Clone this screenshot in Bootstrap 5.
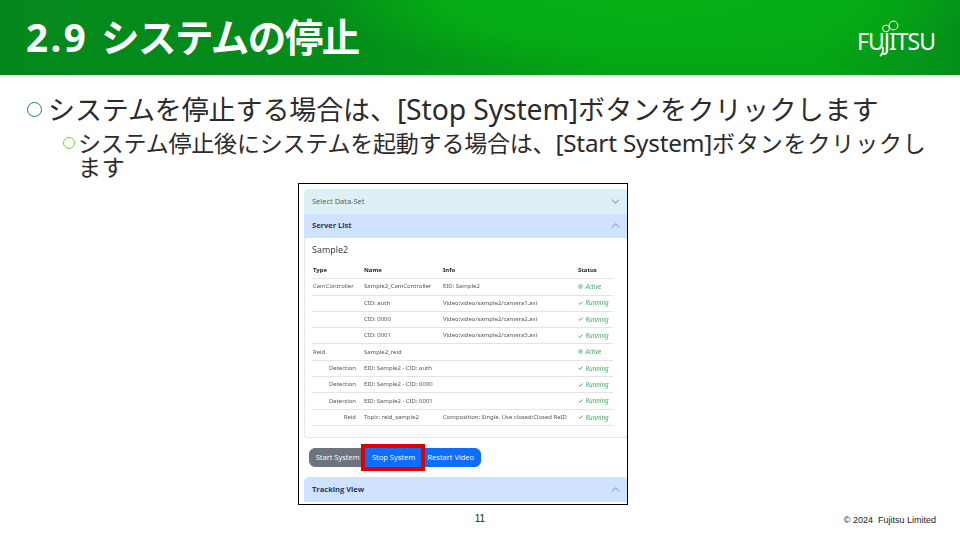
<!DOCTYPE html>
<html lang="ja">

<head>
  <meta charset="utf-8">
  <meta name="viewport" content="width=device-width">
  <title>2.9 システムの停止</title>
  <link href="https://cdn.jsdelivr.net/npm/bootstrap@5.3.3/dist/css/bootstrap.min.css" rel="stylesheet" />
  <style>
    html, body { width: 960px; height: 540px; overflow: hidden; background: #fff; }
    body { font-family: "Noto Sans", "Noto Sans CJK JP", sans-serif; color: #2b2b2b; }

    .slide-head { height: 75px; padding: 0 24px 0 26px; color: #fff;
      background: radial-gradient(ellipse 330px 75px at 650px 0, #05b014 0%, #05ab14 60%, rgba(5,168,20,0) 100%),
                  linear-gradient(90deg, #04881c 0%, #048c1b 35%, #05a415 65%, #05a615 85%, #048f1a 100%); }
    .slide-title { font-size: 38.5px; font-weight: 700; line-height: 1; margin: 0; letter-spacing: -1.5px; }
    .title-num { letter-spacing: 2.5px; margin-right: 4px; }
    .logo-box { position: relative; width: 77px; height: 40px; margin: 5px 2px 0 0; }
    .logo-text { font-size: 23px; line-height: 1; letter-spacing: -1px; margin-top: 10px; white-space: nowrap; }
    .logo-loop { position: absolute; left: 20px; top: -6px; overflow: visible; }

    .bullets { padding: 19px 30px 0 27px; }
    .line-one { font-size: 27px; line-height: 30px; letter-spacing: -.1px; }
    .line-two { font-size: 23px; line-height: 24px; margin-left: 36px; margin-top: 6px; letter-spacing: -.2px; }
    .line-one .latin-part { font-size: 28.3px; }
    .line-two .latin-part { font-size: 24.3px; }
    .line-one .kana-tail { letter-spacing: .35px; }
    .line-two .kana-tail { letter-spacing: .85px; }
    .ring { flex: none; border-radius: 50%; }
    .ring-one { width: 15px; height: 15px; border: 1.5px solid #1c8a3f; margin: 8px 6px 0 0; }
    .ring-two { width: 12px; height: 12px; border: 1.5px solid #7cd62c; margin: 6px 3px 0 0; }

    .shot-frame { position: relative; width: 330px; height: 322px; margin: 4px 0 0 298px; padding: 5px 0 0 5px;
      border: 1px solid #000; overflow: hidden; background: #fff; }
    .shot-inner { width: 324px; filter: blur(.5px); font-size: 7.5px; color: #555; font-family: "Open Sans", "Noto Sans", sans-serif; }

    .shot-inner .accordion-item { border: 0; border-radius: 0; background: transparent; }
    .shot-inner .accordion-button { font-size: 7.5px; padding: 0 8px; height: 24.5px; border-radius: 0; box-shadow: none; }
    .shot-inner .accordion-button::after { width: 9px; height: 9px; background-size: 9px; opacity: .6; }
    .shot-inner .accordion-button.row-plain { background: #ddf0f8; color: #555; }
    .shot-inner .accordion-button.row-open { background: #cfe2ff; color: #1c3a66; font-weight: 700; }
    .shot-body { padding: 6px 15px 12px 6px; border: 1px solid #e6e6e6; border-top: 0; height: 200px; border-radius: 0 0 3px 3px; }
    .shot-name { font-size: 9px; color: #333; margin: 0 0 6.5px 1px; line-height: 12px; }
    .shot-table { font-size: 5.95px; margin: 0; table-layout: fixed; width: 302px; font-family: "Noto Sans", sans-serif; }
    .shot-table th, .shot-table td { padding: 0 2px; height: 16.3px; vertical-align: middle; color: #555; white-space: nowrap; border-color: #e4e4e4; }
    .shot-table th { color: #222; }
    .shot-table td.text-end { padding-right: 6px; }
    .shot-table td .stat-ok { color: #4aa864; font-style: italic; display: inline-flex; align-items: center; gap: 2.5px; font-size: 6.2px; }
    .shot-btns { margin: 10px 0 10px 5px; }
    .shot-btns .btn { font-size: 7.5px; line-height: 1; padding: 0 5.7px; height: 19px; white-space: nowrap; display: flex; align-items: center; }

    .red-box { position: absolute; left: 62px; top: 260px; width: 64px; height: 27px; border: 4px solid #e00000; }

    .slide-foot { position: absolute; left: 0; right: 0; top: 511px; font-family: "Liberation Sans", sans-serif; color: #222; }
    .page-no { font-size: 10px; width: 960px; text-align: center; }
    .copy-line { position: absolute; right: 24px; top: 3px; font-size: 9px; }
  </style>
</head>

<body>
  <header class="slide-head d-flex align-items-center justify-content-between">
    <h1 class="slide-title"><span class="title-num">2.9</span> システムの停止</h1>
    <div class="logo-box">
      <svg class="logo-loop" width="24" height="40" viewBox="0 0 24 40" fill="none" stroke="#fff" stroke-width="1">
        <circle cx="9" cy="14.5" r="3.4" />
        <circle cx="16.5" cy="11.5" r="4.4" />
        <path d="M6 33 C6.5 37 6 40 3 42" stroke-width="1.6" />
      </svg>
      <div class="logo-text">FUJITSU</div>
    </div>
  </header>

  <main>
    <div class="bullets">
      <div class="d-flex line-one"><span class="ring ring-one"></span><span>システムを停止する場合は、<span class="latin-part">[Stop System]</span><span class="kana-tail">ボタンをクリックします</span></span></div>
      <div class="d-flex line-two"><span class="ring ring-two"></span><span>システム停止後にシステムを起動する場合は、<span class="latin-part">[Start System]</span><span class="kana-tail">ボタンをクリックします</span></span></div>
    </div>

    <div class="shot-frame">
      <div class="shot-inner">
        <div class="accordion">
          <div class="accordion-item">
            <h2 class="accordion-header"><button type="button" class="accordion-button collapsed row-plain">Select Data-Set</button></h2>
          </div>
          <div class="accordion-item">
            <h2 class="accordion-header"><button type="button" class="accordion-button row-open">Server List</button></h2>
            <div class="shot-body">
              <h5 class="shot-name">Sample2</h5>
              <table class="table shot-table">
                <colgroup><col style="width:51px"><col style="width:79px"><col style="width:135px"><col></colgroup>
                <thead>
                  <tr><th>Type</th><th>Name</th><th>Info</th><th>Status</th></tr>
                </thead>
                <tbody id="serverRows"></tbody>
              </table>
            </div>
          </div>
        </div>
        <div class="btn-group shot-btns">
          <button type="button" class="btn btn-secondary">Start System</button>
          <button type="button" class="btn btn-primary">Stop System</button>
          <button type="button" class="btn btn-primary">Restart Video</button>
        </div>
        <div class="accordion">
          <div class="accordion-item">
            <h2 class="accordion-header"><button type="button" class="accordion-button row-open">Tracking View</button></h2>
          </div>
        </div>
      </div>
      <div class="red-box"></div>
    </div>
  </main>

  <footer class="slide-foot">
    <div class="page-no">11</div>
    <div class="copy-line">© 2024&nbsp; Fujitsu Limited</div>
  </footer>

  <script src="https://cdn.jsdelivr.net/npm/bootstrap@5.3.3/dist/js/bootstrap.bundle.min.js"></script>
  <script>
    const checkIcon = '<svg width="5" height="4" viewBox="0 0 5 4" fill="none" stroke="#4aa864" stroke-width="1"><path d="M.5 2.2 1.8 3.4 4.5.6"/></svg>';
    const dotIcon = '<svg width="5" height="5" viewBox="0 0 5 5" fill="none" stroke="#4aa864" stroke-width=".7"><circle cx="2.5" cy="2.5" r="1.9"/><circle cx="2.5" cy="2.5" r=".6"/></svg>';
    const running = `<span class="stat-ok">${checkIcon}Running</span>`;
    const active = `<span class="stat-ok">${dotIcon}Active</span>`;
    const rows = [
      ['CamController', 'Sample2_CamController', 'EID: Sample2', active, ''],
      ['', 'CID: auth', 'Video:video/sample2/camera1.avi', running, ''],
      ['', 'CID: 0000', 'Video:video/sample2/camera2.avi', running, ''],
      ['', 'CID: 0001', 'Video:video/sample2/camera3.avi', running, ''],
      ['Reid', 'Sample2_reid', '', active, ''],
      ['Detection', 'EID: Sample2 - CID: auth', '', running, 'text-end'],
      ['Detection', 'EID: Sample2 - CID: 0000', '', running, 'text-end'],
      ['Detection', 'EID: Sample2 - CID: 0001', '', running, 'text-end'],
      ['Reid', 'Topic: reid_sample2', 'Composition: Single, Use closed:Closed ReID', running, 'text-end']
    ];
    document.querySelector('#serverRows').innerHTML = rows.map(r =>
      `<tr><td class="${r[4]}">${r[0]}</td><td>${r[1]}</td><td>${r[2]}</td><td>${r[3]}</td></tr>`).join('');
  </script>
</body>

</html>
